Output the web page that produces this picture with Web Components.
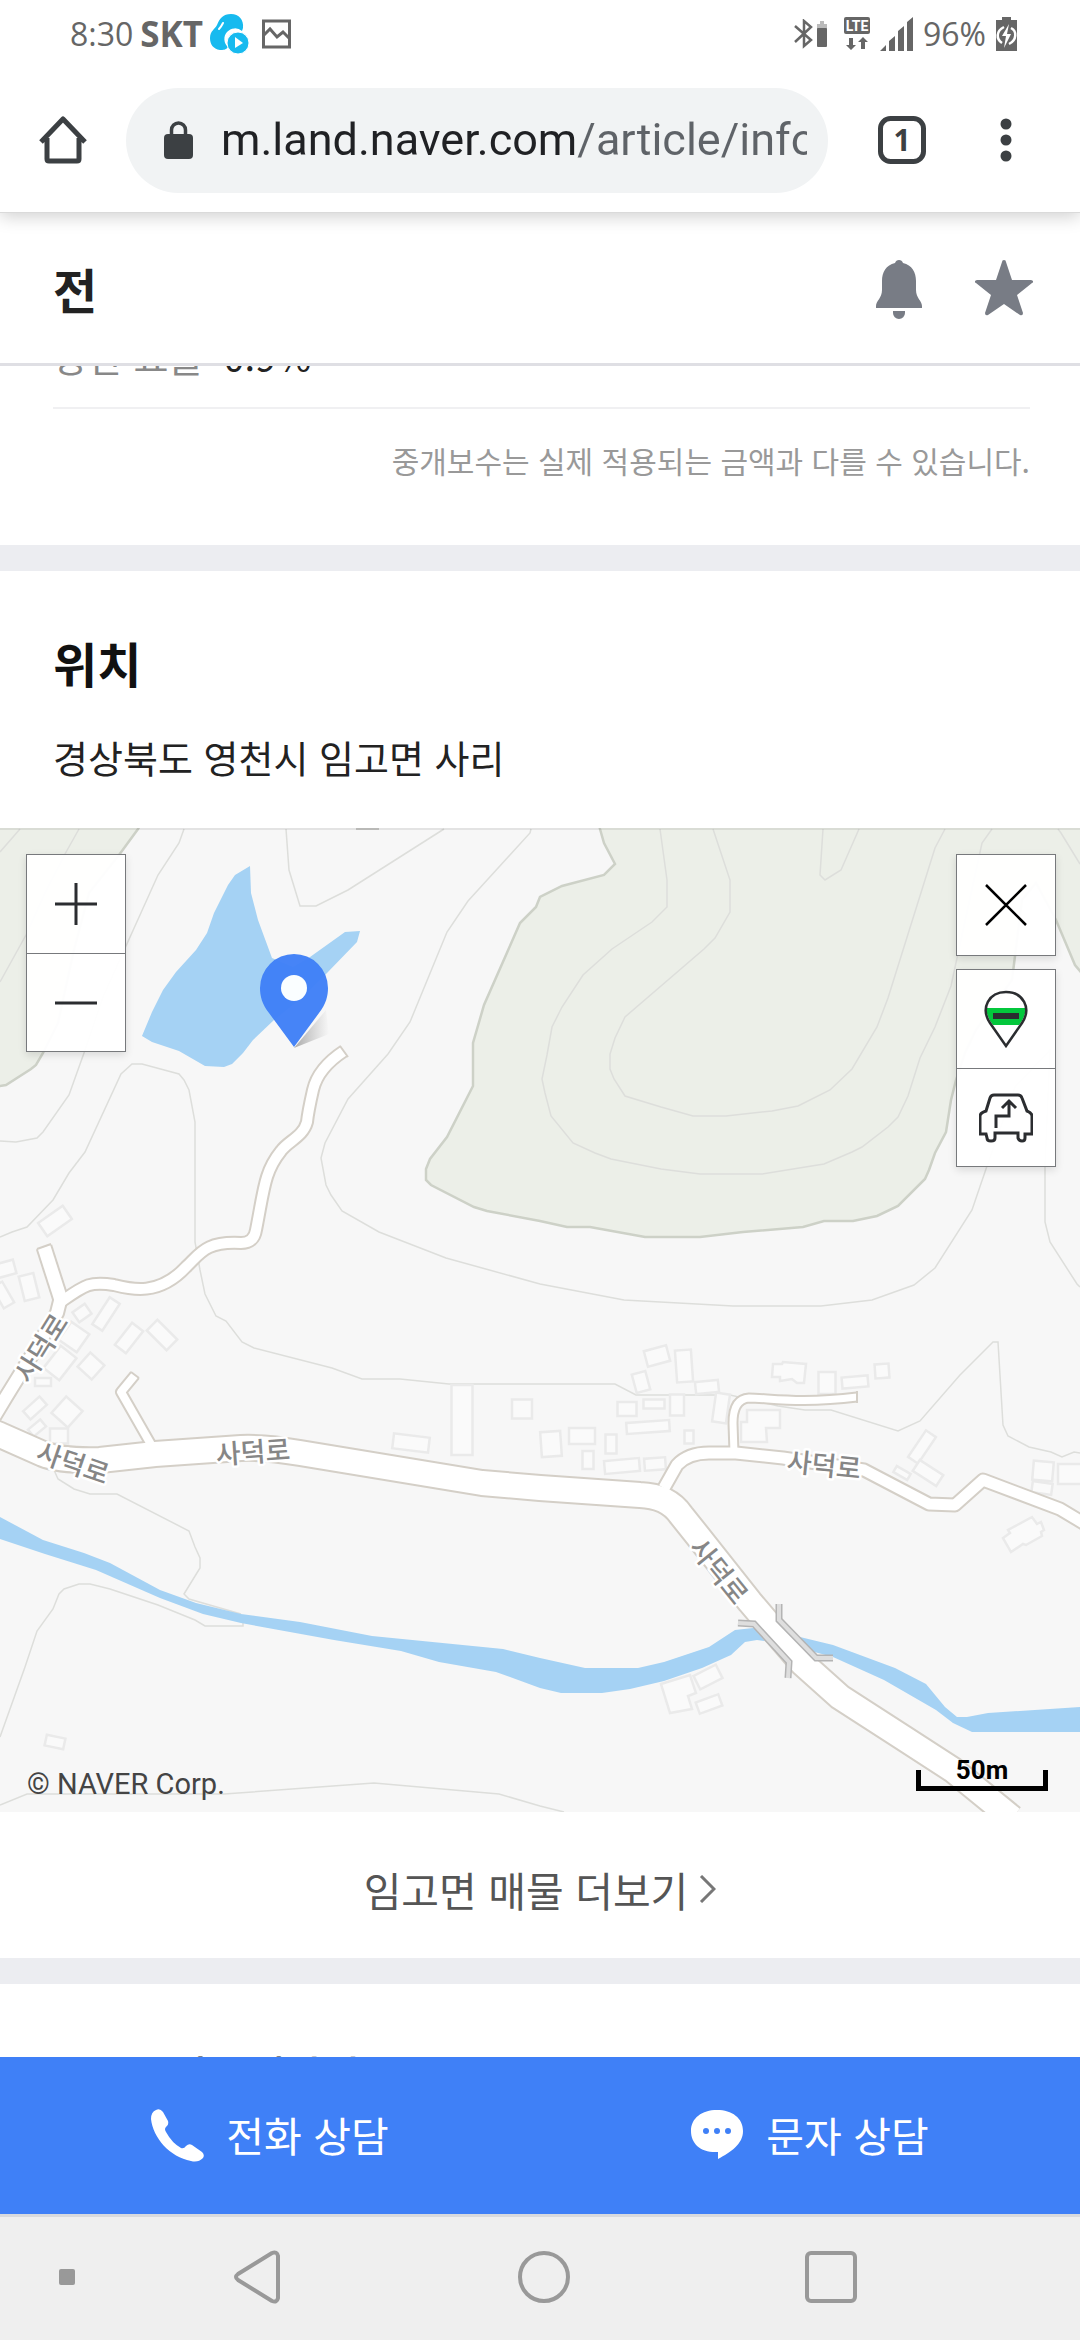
<!DOCTYPE html>
<html lang="ko">
<head>
  <meta charset="utf-8">
  <meta name="viewport" content="width=device-width, initial-scale=1">
  <title>네이버 부동산</title>
  <style>
    body {
      margin: 0;
      height: 100vh;
      display: flex;
      flex-direction: column;
      background: #fff;
      color: #222;
      font-family: "Noto Sans CJK KR", sans-serif;
      --ui-font: "Open Sans", "Noto Sans", sans-serif;
      --blue: #3f80f7;
      --line: #dfdfe4;
      --gutter: 53px;
    }
    main {
      flex: 1;
      min-height: 0;
      overflow: hidden;
    }
  </style>
</head>
<body>
  <status-bar></status-bar>
  <browser-bar></browser-bar>
  <page-header>전</page-header>
  <main>
    <fee-section rate="0.9%">중개보수는 실제 적용되는 금액과 다를 수 있습니다.</fee-section>
    <location-section heading="위치" address="경상북도 영천시 임고면 사리">
      <naver-map></naver-map>
      <more-link slot="more">임고면 매물 더보기</more-link>
    </location-section>
    <agent-section>우주공인중개사사무소</agent-section>
  </main>
  <action-bar></action-bar>
  <nav-bar></nav-bar>

  <script>
    class StatusBar extends HTMLElement {
      constructor () {
        super()
        this.shadow = this.attachShadow({ mode: 'open' })
      }

      connectedCallback () {
        this.render()
      }

      render () {
        this.shadow.innerHTML =
        /*html*/`
        <style>
          :host {
            position: relative;
            z-index: 3;
            display: flex;
            justify-content: space-between;
            height: 68px;
            padding: 0 63px 0 70px;
            background: #fff;
            color: #666;
            font: 32px/68px var(--ui-font);
          }
          div {
            display: flex;
            align-items: center;
          }
          b { font-size: 35px; }
          .left { gap: 7px; }
          .right { gap: 10px; }
          .picture { margin-left: 6px; }
          .lte { margin-left: 6px; }
          svg { display: block; }
        </style>
        <div class="left">
          <span>8:30</span>
          <b>SKT</b>
          <svg width="39" height="40" viewBox="0 0 39 40">
            <path fill="#17baef" d="M21 0c8 0 13 6 12 14l-1 3a10 10 0 0 0-14 16c-2 3-5 3-8 3C3 35 0 30 0 24c0-7 5-9 7-13C10 4 13 0 21 0z"/>
            <path fill="none" stroke="#fff" stroke-width="2" stroke-linecap="round" d="M13 9c-1 2-2 4-4 6"/>
            <circle cx="28" cy="29" r="11" fill="#17baef" stroke="#fff" stroke-width="1"/>
            <path fill="#fff" d="M25 23l8 6-8 5z"/>
          </svg>
          <svg class="picture" width="29" height="30" viewBox="0 0 29 30">
            <path fill="none" stroke="#666" stroke-width="3" d="M1.500 2h26v26h-26zM2 16l6-6 7 8 6-5 7 7"/>
          </svg>
        </div>
        <div class="right">
          <svg width="34" height="30" viewBox="0 0 34 30">
            <path fill="none" stroke="#666" stroke-width="2.500" d="M1 7l16 14-7 6V2l7 6L1 23"/>
            <path fill="#bbb" d="M23 5h3V2h4v3h3v5H23z"/>
            <rect x="23" y="9" width="10" height="19" rx="1" fill="#666"/>
          </svg>
          <svg class="lte" width="26" height="34" viewBox="0 0 26 34">
            <rect width="26" height="17" rx="2" fill="#666"/>
            <text x="13" y="14" fill="#fff" font-family="Roboto, sans-serif" font-size="14" font-weight="700" text-anchor="middle">LTE</text>
            <path fill="#666" d="M5 21h4v7h3l-5 5-5-5h3zM17 32h4v-7h3l-5-5-5 5h3z"/>
          </svg>
          <svg width="33" height="34" viewBox="0 0 33 34">
            <path fill="#666" d="M0 34l6-6v6zM9 24l6-5v15H9zM18 14l6-5v25h-6zM27 5l6-5v34h-6z"/>
          </svg>
          <span>96%</span>
          <svg width="21" height="34" viewBox="0 0 21 34">
            <path fill="#666" d="M6 0h9v3h6v31H0V3h6z"/>
            <path fill="none" stroke="#fff" stroke-width="2.500" d="M8 10c-8 4-8 12-2 16M13 27c8-4 8-13 2-16"/>
            <path fill="#fff" d="M13 7L6 19h4l-2 12 7-14h-4z"/>
          </svg>
        </div>
        `
      }
    }

    class BrowserBar extends HTMLElement {
      constructor () {
        super()
        this.shadow = this.attachShadow({ mode: 'open' })
      }

      connectedCallback () {
        this.render()
      }

      render () {
        this.shadow.innerHTML =
        /*html*/`
        <style>
          :host {
            position: relative;
            z-index: 2;
            display: flex;
            align-items: center;
            height: 145px;
            padding-right: 43px;
            border-bottom: 1px solid #dadada;
            box-shadow: 0 4px 16px rgba(0, 0, 0, .18);
            background: #fff;
            box-sizing: border-box;
            flex: none;
          }
          button {
            display: flex;
            justify-content: center;
            border: 0;
            padding: 0;
            background: none;
          }
          .home { width: 126px; }
          .tabs { width: 147px; }
          .menu { width: 62px; }
          .omnibox {
            flex: 1;
            display: flex;
            align-items: center;
            gap: 28px;
            height: 105px;
            padding: 0 21px 0 38px;
            border-radius: 53px;
            background: #f1f3f4;
          }
          input {
            flex: 1;
            min-width: 0;
            height: 70px;
            padding: 0;
            border: 0;
            outline: 0;
            font: 45px/70px Roboto, sans-serif;
            /* host name dark, path grey */
            background: linear-gradient(90deg, #202124 357px, #5f6368 357px);
            background-clip: text;
            -webkit-background-clip: text;
            color: transparent;
          }
        </style>
        <button class="home" aria-label="홈">
          <svg width="48" height="48" viewBox="0 0 48 48">
            <path fill="none" stroke="#3c4043" stroke-width="5" stroke-linejoin="round" d="M2 26L24 3l22 23M8 22v21q0 2 2 2h28q2 0 2-2V22"/>
          </svg>
        </button>
        <div class="omnibox">
          <svg width="29" height="38" viewBox="0 0 29 38">
            <rect y="13" width="29" height="25" rx="4" fill="#3c4043"/>
            <path fill="none" stroke="#3c4043" stroke-width="3.500" d="M7.500 15V9a7 7 0 0 1 14 0v6"/>
          </svg>
          <input type="text" aria-label="주소" value="m.land.naver.com/article/info/">
        </div>
        <button class="tabs" aria-label="탭">
          <svg width="48" height="48" viewBox="0 0 48 48">
            <rect x="2.500" y="2.500" width="43" height="43" rx="10" fill="none" stroke="#3c4043" stroke-width="5"/>
            <text x="24" y="35" fill="#3c4043" font-family="Open Sans, sans-serif" font-size="30" font-weight="700" text-anchor="middle">1</text>
          </svg>
        </button>
        <button class="menu" aria-label="메뉴">
          <svg width="12" height="44" viewBox="0 0 12 44" fill="#3c4043">
            <circle cx="6" cy="6" r="5.500"/><circle cx="6" cy="22" r="5.500"/><circle cx="6" cy="38" r="5.500"/>
          </svg>
        </button>
        `
      }
    }

    class PageHeader extends HTMLElement {
      constructor () {
        super()
        this.shadow = this.attachShadow({ mode: 'open' })
      }

      connectedCallback () {
        this.render()
      }

      render () {
        this.shadow.innerHTML =
        /*html*/`
        <style>
          :host {
            position: relative;
            z-index: 1;
            display: flex;
            align-items: center;
            height: 146px;
            padding: 4px 47px 0 var(--gutter);
            border-bottom: 3px solid var(--line);
            background: #fff;
            flex: none;
          }
          h1 {
            flex: 1;
            margin: 0;
            padding-bottom: 4px;
            font-size: 48px;
            line-height: 60px;
          }
          button {
            display: block;
            border: 0;
            padding: 0;
            margin-left: 52px;
            background: none;
          }
          svg {
            display: block;
            fill: #787c85;
          }
        </style>
        <h1><slot></slot></h1>
        <button aria-label="알림">
          <svg width="48" height="60" viewBox="0 0 48 60">
            <path d="M24 0q3 0 4 3c9 2 13 9 13 18v9c0 8 6 11 6 16v2H1v-2c0-5 6-8 6-16v-9C7 12 11 5 20 3q1-3 4-3zM18 51h12v2a6 6 0 0 1-12 0z"/>
          </svg>
        </button>
        <button aria-label="관심">
          <svg width="58" height="60" viewBox="0 0 58 60">
            <path d="M29 0q2 0 2 2l6 18h19q4 1 1 3L42 35l6 18q0 3-3 2L29 44 13 55q-3 1-3-2l6-18L1 23q-3-2 1-3h19l6-18q0-2 2-2z"/>
          </svg>
        </button>
        `
      }
    }

    class FeeSection extends HTMLElement {
      constructor () {
        super()
        this.shadow = this.attachShadow({ mode: 'open' })
      }

      connectedCallback () {
        this.render()
      }

      render () {
        this.shadow.innerHTML =
        /*html*/`
        <style>
          :host {
            display: block;
            padding: 0 50px 65px var(--gutter);
            border-bottom: 26px solid #ecedf1;
          }
          /* scrolled half way under the page header */
          dl {
            display: flex;
            gap: 20px;
            margin: -38px 0 0;
            padding-bottom: 23px;
            border-bottom: 2px solid #f0f0f2;
            font-size: 38px;
            line-height: 56px;
          }
          dt { color: #888; }
          dd { margin: 0; }
          p {
            margin: 31px 0 0;
            color: #999;
            font-size: 30px;
            line-height: 40px;
            text-align: right;
          }
        </style>
        <dl>
          <dt>상한 요율</dt>
          <dd>${this.getAttribute('rate')}</dd>
        </dl>
        <p><slot></slot></p>
        `
      }
    }

    class LocationSection extends HTMLElement {
      constructor () {
        super()
        this.shadow = this.attachShadow({ mode: 'open' })
      }

      connectedCallback () {
        this.render()
      }

      render () {
        this.shadow.innerHTML =
        /*html*/`
        <style>
          :host {
            display: block;
            border-bottom: 26px solid #ecedf1;
          }
          header {
            display: flex;
            flex-direction: column;
            gap: 40px;
            padding: 61px var(--gutter) 46px;
          }
          h2 {
            margin: 0;
            color: #111;
            font-size: 48px;
            line-height: 60px;
          }
          p {
            margin: 0;
            font-size: 38px;
            line-height: 50px;
          }
        </style>
        <header>
          <h2>${this.getAttribute('heading')}</h2>
          <p>${this.getAttribute('address')}</p>
        </header>
        <slot></slot>
        <slot name="more"></slot>
        `
      }
    }

    class NaverMap extends HTMLElement {
      constructor () {
        super()
        this.shadow = this.attachShadow({ mode: 'open' })
      }

      connectedCallback () {
        this.render()
      }

      render () {
        this.shadow.innerHTML =
        /*html*/`
        <style>
          :host {
            display: block;
            position: relative;
          }
          .ground {
            display: block;
            width: 100%;
            height: auto;
            background: #f7f7f7;
          }
          .wood { fill: #ecefe8; stroke: #cdd1c7; stroke-width: 2.500; }
          .contour { fill: none; stroke: #dddedb; stroke-width: 1.500; }
          .house { fill: #fafafa; stroke: #eaeaea; stroke-width: 2.500; }
          .water { fill: #a5d2f4; }
          .casing, .road { fill: none; stroke-linejoin: round; }
          .casing { stroke: #d4cfc7; }
          .road { stroke: #fff; }
          .rail { fill: none; stroke: #b4b4b4; stroke-width: 7; }
          .gap { fill: none; stroke: #dedede; stroke-width: 4; }
          .name {
            fill: #868686;
            stroke: #fff;
            stroke-width: 5;
            paint-order: stroke;
            stroke-linejoin: round;
            font-size: 27px;
            font-weight: 500;
            text-anchor: middle;
          }
          .controls {
            position: absolute;
            top: 26px;
            display: grid;
            gap: 13px;
          }
          .zoom { left: 26px; }
          .tools { right: 24px; }
          .group {
            border: 1px solid #77797c;
            background: rgba(255, 255, 255, .96);
            box-shadow: 0 3px 8px rgba(0, 0, 0, .12);
          }
          button {
            display: grid;
            place-items: center;
            width: 98px;
            height: 98px;
            padding: 0;
            border: 0;
            background: none;
          }
          button + button { border-top: 1px solid #77797c; }
          .close { height: 100px; }
          button svg { fill: none; stroke: #2b2d30; stroke-width: 3; }
          small {
            position: absolute;
            left: 27px;
            bottom: 8px;
            color: #444;
            font: 29px/40px Roboto, sans-serif;
          }
          .scale {
            position: absolute;
            right: 32px;
            bottom: 21px;
            width: 122px;
            height: 16px;
            border: 5px solid #000;
            border-top: 0;
            color: #000;
            font: 700 26px/1 Roboto, sans-serif;
            text-align: center;
            display: flex;
            align-items: end;
            justify-content: center;
          }
          .scale span { padding-bottom: 3px; }
        </style>
        <svg class="ground" viewBox="0 828 1080 984">
          <path class="wood" d="M-5 820H143L138 829 119 855 89 893 74 950 58 1023 43 1053 36 1065 31 1069 6 1085-5 1087z"/>
          <path class="wood" d="M598 820L600 829 604 843 615 864 604 875 562 886 540 897 536 907 520 923 484 1005 473 1043V1086L447 1137 430 1159 426 1169V1180L431 1185 474 1207 487 1211 540 1221 567 1227H590L645 1237H700L743 1232 803 1227 824 1221H853L877 1216 898 1206 925 1179 929 1170 935 1153 946 1132 951 1100 956 1080 965 1053 976 1030 1012 980 1015 956 1022 900 1036 883 1056 920 1075 965 1085 977V820z"/>
          <g class="contour">
            <path d="M20 829L0 852M79 829L65 854 45 893 26 935 0 982"/>
            <path d="M184 829L179 843 158 875 126 946 103 997 84 1053 69 1095 43 1132 37 1138 16 1142 0 1141"/>
            <path d="M286 829L289 870 300 906H316L348 890 444 829"/>
            <path d="M531 829L530 833 468 901 447 932 410 1022 388 1054 348 1099 325 1143 321 1158 326 1185 331 1195 342 1211 379 1232 446 1258 540 1284 624 1300 733 1306H821L872 1300 914 1285 935 1268 972 1210 987 1166 1015 1087 1050 1050 1045 1166V1222L1050 1242 1077 1284 1080 1287"/>
            <path d="M0 1237L12 1232 27 1227 53 1200 69 1173 85 1152 121 1074 132 1064H142L179 1074 184 1080 189 1090 195 1122V1242L200 1270 205 1294 216 1316 226 1321 242 1342 254 1348 332 1368 362 1379H400L449 1384H615L636 1395H730L778 1406 805 1410H831L898 1431 920 1421 960 1375 993 1342H998L1003 1425 1008 1436 1029 1447 1051 1452 1062 1457 1074 1452 1080 1453"/>
            <path d="M660 829L667 880V907L652 922 612 949 583 975 562 1007 552 1027 547 1055 542 1079 545 1093 551 1116 573 1143 595 1153 611 1159 661 1169 700 1174H762L824 1164 852 1152 862 1147 888 1127 898 1117 908 1096 920 1058 935 1027 951 986 957 958 982 843 992 829"/>
            <path d="M713 829L730 880V912L715 938 704 949 625 1017 615 1038 610 1054V1069L614 1079 625 1096 661 1107 693 1116H726L772 1111 798 1106 830 1090 852 1069 877 1027 888 998 935 848 945 829"/>
            <path d="M823 829L820 875 825 880 841 870 859 829M1058 829L1061 833 1080 864"/>
            <path d="M54 1470L58 1479 74 1489 90 1494H117L189 1531 195 1547 200 1558V1568L184 1594 189 1599 241 1614"/>
            <path d="M0 1737L25 1667 37 1631 53 1609 59 1594 64 1589 79 1584H90L110 1589 158 1605 195 1620 205 1626H243V1620"/>
            <path d="M0 1805L27 1794H224L374 1783 499 1794 540 1806 564 1812"/>
          </g>
          <path fill="#c9c9c7" d="M356 828h23v2h-23z"/>
          <g class="house" id="houses">
            <path d="M773 1364h9l1-2 23 2-2 19h-7l-5-4-12 2v-4h-8z"/>
            <path d="M747 1410h33v18h-14l1 14h-26v-20h6z"/>
            <path d="M661 1684l29-9 6 18-8 3 4 13-22 4z"/>
            <path d="M1003 1538l7-5-2-3 24-13 5 7 4-2 3 8-3 2 1 4-16 9-3-1-12 8z"/>
          </g>
          <path class="water" d="M250 866L235 875 228 885 214 913 207 933 196 950 176 972 163 990 152 1012 142 1036 152 1042 179 1051 205 1066 224 1067 232 1064 243 1053 253 1040 274 1020 303 997 327 973 357 942 360 931 345 932 310 957 293 967 272 958 258 920 251 893z"/>
          <path class="water" d="M0 1517L43 1540 84 1553 110 1563 160 1590 196 1603 241 1614 300 1622 372 1636 503 1649 540 1658 585 1668H638L664 1662 709 1647 735 1630 753 1628 800 1637 833 1645 895 1668 926 1684 945 1707 957 1717H967L988 1713 1080 1707V1732H972L953 1723 936 1710 884 1680 833 1657 781 1643 757 1640 745 1642 731 1655 702 1668 664 1681 630 1689 602 1693H561L540 1688 496 1672 439 1662 401 1651 334 1640 241 1623 203 1614 160 1598 96 1570 45 1554 0 1539z"/>
          <g id="roads"></g>
          <path class="rail" d="M738 1623L754 1624 789 1662 788 1678M779 1604V1620L816 1658H833"/>
          <path class="gap" d="M738 1623L754 1624 789 1662 788 1678M779 1604V1620L816 1658H833"/>
          <g id="names"></g>
          <path fill="url(#shade)" d="M294 1048L329 1034 326 1010z"/>
          <path fill="#4080f7" fill-opacity=".97" d="M294 1047L269 1013C262 1004 260 996 260 988A34 34 0 0 1 328 988C328 996 326 1004 319 1013z"/>
          <circle cx="294" cy="988" r="13" fill="#fafeff"/>
          <path stroke="#000" stroke-opacity=".08" stroke-width="2" d="M0 829H1080"/>
          <linearGradient id="shade">
            <stop stop-color="#888" stop-opacity=".7"/><stop offset="1" stop-color="#999" stop-opacity="0"/>
          </linearGradient>
        </svg>
        <div class="controls zoom">
          <div class="group">
            <button aria-label="확대"><svg width="42" height="42"><path d="M0 21h42M21 0v42"/></svg></button>
            <button aria-label="축소"><svg width="42" height="42"><path d="M0 21h42"/></svg></button>
          </div>
        </div>
        <div class="controls tools">
          <div class="group">
            <button class="close" aria-label="닫기"><svg width="42" height="42"><path stroke="#000" stroke-width="2.500" d="M1 1l40 40M41 1L1 41"/></svg></button>
          </div>
          <div class="group">
            <button aria-label="거리뷰">
              <svg width="44" height="58" viewBox="0 0 44 58">
                <path fill="#03c73c" stroke="none" d="M2 18h40q-1 10-7 17H9Q3 28 2 18z"/>
                <path stroke-width="2.500" d="M22 56L6 33C-4 18 5 2 22 2s26 16 16 31z"/>
                <path stroke-width="6" d="M9 26h26"/>
              </svg>
            </button>
            <button aria-label="길찾기">
              <svg width="54" height="50" viewBox="0 0 54 50">
                <path d="M7 41H1V23q0-3 6-5l4-13q1-3 4-3h24q3 0 4 3l5 13q5 2 5 5v18h-7v4q0 3-3 3t-4-3v-5H16v5q0 3-4 3t-4-3z"/>
                <path d="M17 35V23h13V8M23 15l7-7 7 7"/>
              </svg>
            </button>
          </div>
        </div>
        <small>© NAVER Corp.</small>
        <div class="scale"><span>50m</span></div>
        `
        this.drawHouses()
        this.drawRoads()
        this.drawNames()
      }

      // centre x, centre y, width, height, angle
      drawHouses () {
        const houses = [
          [55, 1221, 30, 16, -35], [5, 1269, 20, 14, -15], [29, 1287, 15, 25, -14], [3, 1295, 12, 24, -30],
          [82, 1313, 15, 12, -35], [106, 1314, 12, 32, 33], [129, 1338, 14, 28, 38], [162, 1335, 28, 15, 45],
          [74, 1337, 22, 22, 35], [60, 1363, 20, 28, 38], [91, 1366, 19, 19, 42], [43, 1382, 16, 8, 0],
          [35, 1408, 22, 11, -42], [67, 1412, 22, 22, 42], [37, 1428, 16, 9, -40], [59, 1436, 18, 15, 0],
          [411, 1443, 36, 15, 7], [462, 1420, 21, 70, 0], [522, 1409, 20, 19, 0], [551, 1444, 20, 25, -4],
          [582, 1436, 26, 16, 0], [588, 1460, 11, 18, 0], [611, 1444, 11, 19, 0], [627, 1409, 19, 14, 0],
          [654, 1404, 21, 9, 0], [648, 1427, 43, 11, -4], [622, 1466, 35, 13, -5], [655, 1464, 21, 12, -4],
          [677, 1405, 14, 21, 0], [689, 1437, 9, 13, 0], [657, 1356, 23, 16, -15], [641, 1382, 14, 19, -15],
          [684, 1366, 16, 32, -4], [707, 1387, 23, 12, -6], [721, 1408, 14, 29, 8], [827, 1383, 17, 22, 0],
          [855, 1382, 26, 11, -5], [882, 1371, 14, 14, -4], [922, 1447, 12, 32, 34], [928, 1473, 28, 13, 33],
          [902, 1473, 16, 7, 30], [1043, 1471, 20, 19, 5], [1042, 1488, 20, 11, 8], [1071, 1474, 26, 20, 0],
          [708, 1677, 25, 15, -27], [709, 1704, 24, 12, -20], [55, 1742, 19, 11, 12]
        ]
        this.shadow.querySelector('#houses').innerHTML += houses.map(([x, y, w, h, a]) =>
          `<rect x="${x - w / 2}" y="${y - h / 2}" width="${w}" height="${h}" transform="rotate(${a} ${x} ${y})"/>`
        ).join('')
      }

      // all casings go under all roads so that the junctions stay open
      drawRoads () {
        const roads = [
          [10, 'M344 1051Q318 1068 313 1090T307 1122C303 1137 288 1141 281 1151C264 1172 264 1190 256 1230Q254 1243 241 1243C205 1241 200 1254 186 1267C158 1297 130 1289 114 1285C90 1281 85 1285 62 1301'],
          [13, 'M44 1247L61 1300'],
          [12, 'M61 1297L57 1313 35 1350 6 1397-6 1417'],
          [8, 'M135 1375L121 1392 153 1448'],
          [24, 'M-10 1431L0 1435 43 1454Q60 1461 100 1460L155 1454 241 1448Q265 1447 300 1453L482 1483 540 1488 640 1495Q668 1496 681 1515L697 1535 750 1602 802 1663 840 1697 902 1737 953 1770 1012 1818'],
          [11, 'M664 1488L677 1465Q688 1453 709 1453H736L783 1458 864 1470 929 1504 955 1505 983 1480 1060 1509 1085 1524'],
          [7, 'M734 1453L733 1423Q733 1399 749 1398C769 1398 800 1404 857 1397']
        ]
        this.shadow.querySelector('#roads').innerHTML =
          roads.map(([w, d]) => `<path class="casing" stroke-width="${w + 4}" d="${d}"/>`).join('') +
          roads.map(([w, d]) => `<path class="road" stroke-width="${w}" d="${d}"/>`).join('') +
          '<path class="casing" stroke-width="2" d="M340 1046L348 1057M37 1249L51 1244M131 1372L139 1378M857 1391V1403"/>'
      }

      drawNames () {
        const names = [[41, 1348, -58], [73, 1463, 19], [253, 1452, -4], [824, 1465, 6], [719, 1571, 51]]
        this.shadow.querySelector('#names').innerHTML = names.map(([x, y, a]) =>
          `<text class="name" x="${x}" y="${y + 10}" transform="rotate(${a} ${x} ${y})">사덕로</text>`
        ).join('')
      }
    }

    class MoreLink extends HTMLElement {
      constructor () {
        super()
        this.shadow = this.attachShadow({ mode: 'open' })
      }

      connectedCallback () {
        this.render()
      }

      render () {
        this.shadow.innerHTML =
        /*html*/`
        <style>
          :host { display: block; }
          a {
            display: flex;
            justify-content: center;
            align-items: center;
            gap: 11px;
            padding: 52px 0 44px;
            color: #555;
            font-size: 41px;
            line-height: 50px;
            text-decoration: none;
          }
        </style>
        <a href="#more">
          <slot></slot>
          <svg width="17" height="28" viewBox="0 0 17 28">
            <path fill="none" stroke="#777" stroke-width="3" d="M2 1l13 13L2 27"/>
          </svg>
        </a>
        `
      }
    }

    class AgentSection extends HTMLElement {
      constructor () {
        super()
        this.shadow = this.attachShadow({ mode: 'open' })
      }

      connectedCallback () {
        this.render()
      }

      render () {
        this.shadow.innerHTML =
        /*html*/`
        <style>
          :host {
            display: block;
            padding: 65px var(--gutter);
          }
          h2 {
            margin: 0;
            font-size: 42px;
            font-weight: 500;
            line-height: 50px;
          }
        </style>
        <h2><slot></slot></h2>
        `
      }
    }

    class ActionBar extends HTMLElement {
      constructor () {
        super()
        this.shadow = this.attachShadow({ mode: 'open' })
      }

      connectedCallback () {
        this.render()
      }

      render () {
        this.shadow.innerHTML =
        /*html*/`
        <style>
          :host {
            display: flex;
            height: 157px;
            border-bottom: 3px solid #d8dade;
            background: var(--blue);
            flex: none;
            z-index: 1;
          }
          button {
            flex: 1;
            display: flex;
            justify-content: center;
            align-items: center;
            gap: 22px;
            border: 0;
            padding: 0;
            background: none;
            color: #fff;
            font: inherit;
            font-size: 41px;
            line-height: 60px;
          }
          span { padding-bottom: 4px; }
          svg { fill: #fff; }
        </style>
        <button>
          <svg width="53" height="53" viewBox="0 0 53 53">
            <path d="M5 1Q9-1 12 3l5 9q1 4-2 6-2 2 0 5 6 11 15 16 3 1 5-2 3-3 6-1l10 7q3 3 1 6-5 5-12 3C19 48 2 29 0 10Q0 3 5 1z"/>
          </svg>
          <span>전화 상담</span>
        </button>
        <button>
          <svg width="53" height="53" viewBox="0 0 53 53">
            <path d="M26 1c15 0 26 8 26 21S40 43 27 50v-7C10 44 0 35 0 22S11 1 26 1z"/>
            <g fill="#3f80f7"><circle cx="15" cy="22" r="3"/><circle cx="26" cy="22" r="3"/><circle cx="37" cy="22" r="3"/></g>
          </svg>
          <span>문자 상담</span>
        </button>
        `
      }
    }

    class NavBar extends HTMLElement {
      constructor () {
        super()
        this.shadow = this.attachShadow({ mode: 'open' })
      }

      connectedCallback () {
        this.render()
      }

      render () {
        this.shadow.innerHTML =
        /*html*/`
        <style>
          :host {
            display: grid;
            grid-template-columns: 114px 1fr 1fr 1fr 106px;
            height: 120px;
            padding-bottom: 3px;
            background: #efefef;
            flex: none;
          }
          button {
            display: grid;
            place-items: center;
            border: 0;
            padding: 0;
            background: none;
          }
          .pin { padding-left: 20px; }
          svg { fill: none; stroke: #999; stroke-width: 4; stroke-linejoin: round; }
        </style>
        <button class="pin" aria-label="고정"><svg width="16" height="16"><rect width="16" height="16" rx="2" fill="#999" stroke="none"/></svg></button>
        <button aria-label="뒤로"><svg width="48" height="54"><path d="M5 24L39 3q5-2 6 3v42q-1 5-6 3L5 30q-4-3 0-6z"/></svg></button>
        <button aria-label="홈"><svg width="54" height="54"><circle cx="27" cy="27" r="24"/></svg></button>
        <button aria-label="최근"><svg width="54" height="54"><rect x="3" y="3" width="48" height="48" rx="4"/></svg></button>
        `
      }
    }

    customElements.define('status-bar', StatusBar);
    customElements.define('browser-bar', BrowserBar);
    customElements.define('page-header', PageHeader);
    customElements.define('fee-section', FeeSection);
    customElements.define('location-section', LocationSection);
    customElements.define('naver-map', NaverMap);
    customElements.define('more-link', MoreLink);
    customElements.define('agent-section', AgentSection);
    customElements.define('action-bar', ActionBar);
    customElements.define('nav-bar', NavBar);
  </script>
</body>
</html>
